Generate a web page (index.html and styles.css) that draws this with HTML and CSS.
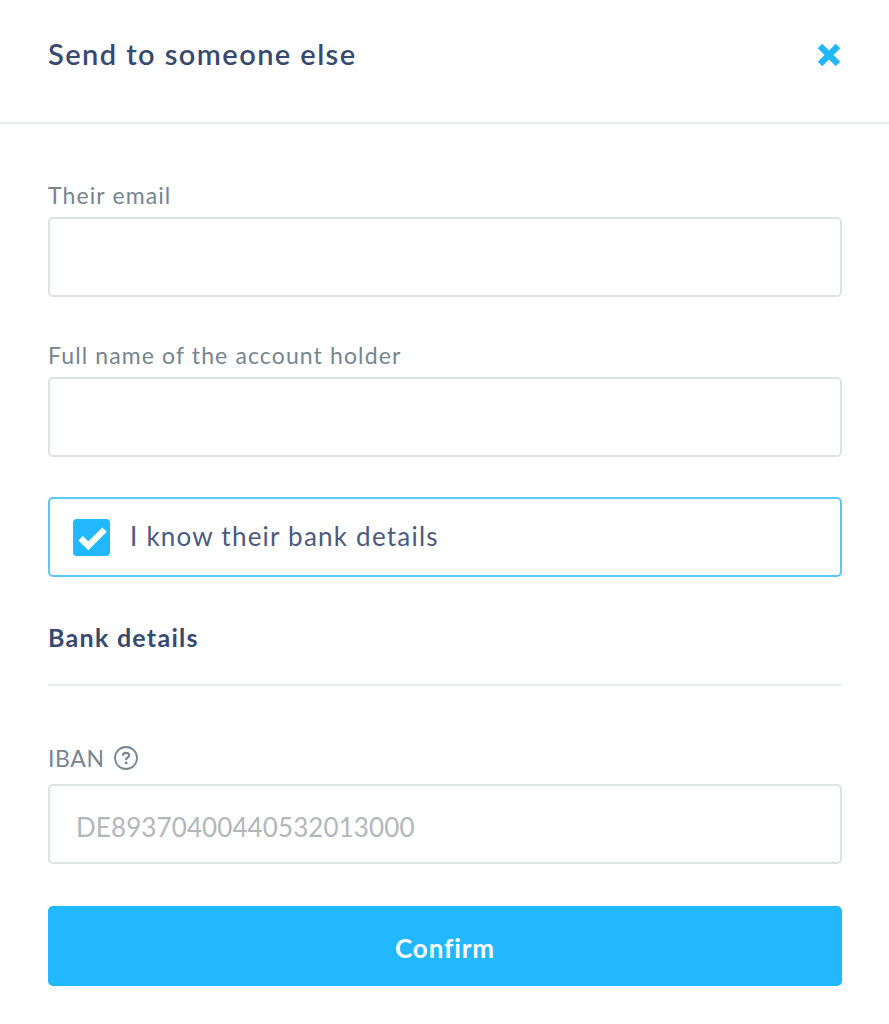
FILE: index.html
```html
<!DOCTYPE html>
<html lang="en">
<head>
  <meta charset="UTF-8" />
  <meta name="viewport" content="width=device-width, initial-scale=1.0"/>
  <title>Send to someone else</title>
  <link rel="stylesheet" href="styles.css">
</head>
<body>
  <div class="modal">
    <div class="modal-header">
      <h1 class="modal-title">Send to someone else</h1>
      <button type="button" class="close-btn" aria-label="Close">
        <svg width="24" height="24" viewBox="0 0 24 24">
          <path d="M3 3 L21 21 M21 3 L3 21" stroke="#22b8ff" stroke-width="6.4" fill="none"/>
        </svg>
      </button>
    </div>

    <form class="modal-body">
      <div class="field">
        <label class="label" for="email">Their email</label>
        <input class="input" type="email" id="email">
      </div>

      <div class="field">
        <label class="label" for="name">Full name of the account holder</label>
        <input class="input" type="text" id="name">
      </div>

      <label class="check-box">
        <input class="check-input" type="checkbox" checked>
        <svg class="check-icon" width="37" height="37" viewBox="0 0 37 37">
          <rect width="37" height="37" rx="4" fill="#22b8ff"/>
          <path d="M7.6 19.3 L15.3 26.8 L31.6 10.6" stroke="#fff" stroke-width="6.2" fill="none"/>
        </svg>
        <span class="check-text">I know their bank details</span>
      </label>

      <h2 class="section-title">Bank details</h2>

      <div class="field field-iban">
        <label class="label" for="iban">
          <span>IBAN</span>
          <svg class="help-icon" width="24" height="24" viewBox="0 0 24 24" fill="none" stroke="#768590">
            <circle cx="12" cy="12" r="11" stroke-width="1.8"/>
            <path d="M8.9 9.6 C9 7.6 10.3 6.9 12 6.9 C13.9 6.9 15.1 7.8 15.1 9.4 C15.1 11.5 12.1 11.3 12.1 13.9" stroke-width="2.2"/>
            <path d="M12.1 15.6 V18" stroke-width="2.5"/>
          </svg>
        </label>
        <input class="input" type="text" id="iban" placeholder="DE89370400440532013000">
      </div>

      <button type="submit" class="confirm-btn">Confirm</button>
    </form>
  </div>
</body>
</html>
```

FILE: styles.css
```css
* {
  box-sizing: border-box;
}

body {
  margin: 0;
  font-family: Lato, "Liberation Sans", sans-serif;
  background: #fff;
  color: #37496f;
}

.modal-header {
  display: flex;
  justify-content: space-between;
  align-items: center;
  height: 124px;
  padding: 0 48px 12px;
  border-bottom: 2px solid #e9ecef;
}

.modal-title {
  margin: 0;
  padding-bottom: 2px;
  font-size: 29px;
  font-weight: 600;
  line-height: 36px;
  letter-spacing: 1.43px;
}

.close-btn {
  display: flex;
  padding: 0;
  border: none;
  background: none;
  cursor: pointer;
}

.modal-body {
  padding: 56px 47px 0 48px;
}

.field {
  margin-bottom: 40px;
}

.label {
  display: flex;
  align-items: center;
  gap: 9px;
  height: 37px;
  padding-bottom: 7px;
  font-size: 23px;
  line-height: 30px;
  letter-spacing: 1.12px;
  color: #768590;
}

.input {
  display: block;
  width: 100%;
  height: 80px;
  padding: 6px 26px 0;
  border: 2px solid #dfe2e4;
  border-radius: 5px;
  background: #fff;
  font-family: inherit;
  font-size: 26px;
  letter-spacing: 0.1px;
  color: #37496f;
  outline: none;
}

.input::placeholder {
  color: #b3b7ba;
  opacity: 1;
}

.field + .field .label {
  margin-top: 43px;
}

.check-box {
  display: flex;
  align-items: center;
  gap: 20px;
  height: 80px;
  padding: 0 23px;
  border: 2px solid #5ac8fa;
  border-radius: 5px;
  font-size: 26px;
  letter-spacing: 1.23px;
  color: #4d5a7d;
  cursor: pointer;
}

.check-input {
  display: none;
}

.check-text {
  padding-bottom: 2px;
}

.section-title {
  height: 109px;
  margin: 0 0 55px;
  padding-top: 44px;
  border-bottom: 2px solid #e9eced;
  font-size: 25px;
  font-weight: 700;
  line-height: 32px;
  letter-spacing: 1.28px;
}

.field-iban {
  margin-bottom: 42px;
}

.field-iban .label {
  height: 43px;
  padding-bottom: 9px;
  letter-spacing: 0.6px;
}

.confirm-btn {
  display: block;
  width: 100%;
  height: 80px;
  padding: 4px 0 0;
  border: none;
  border-radius: 5px;
  background: #22b8ff;
  color: #fff;
  font-family: inherit;
  font-size: 26px;
  font-weight: 700;
  letter-spacing: 0.9px;
  cursor: pointer;
}
```
